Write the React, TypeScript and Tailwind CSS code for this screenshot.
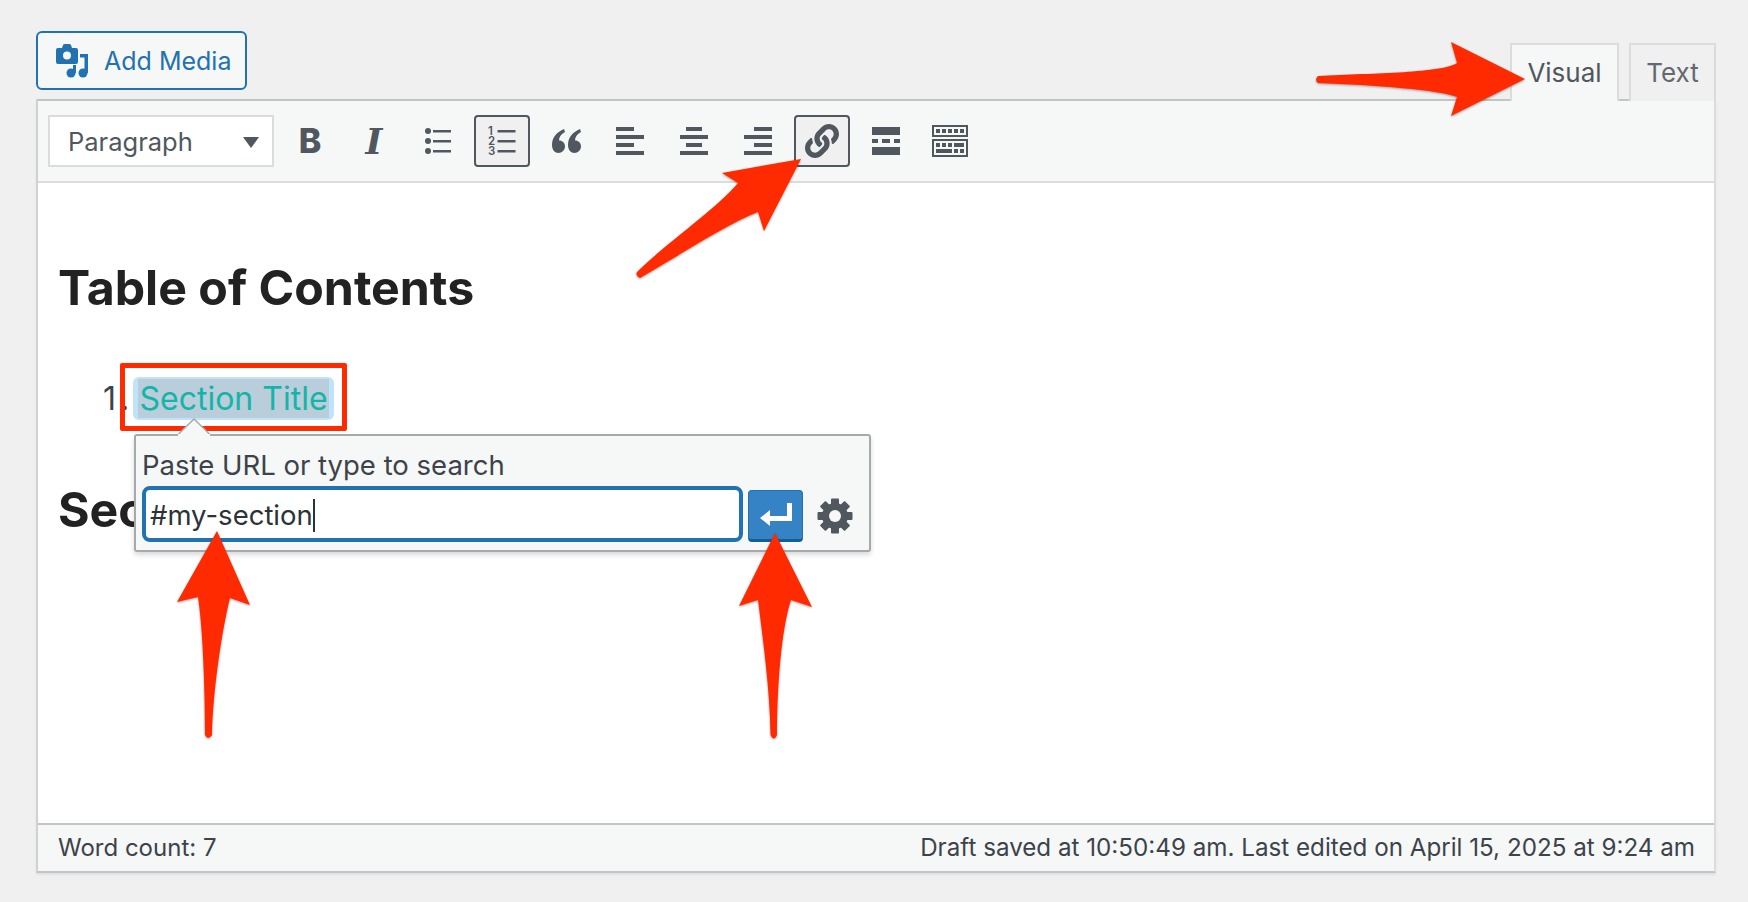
import type { ReactNode } from "react"
import { FaLink } from "react-icons/fa"

function ToolButton({ active, children }: { active?: boolean; children: ReactNode }) {
  return (
    <div
      className={`w-[56px] h-[52px] flex items-center justify-center rounded-[4px] border-2 ${
        active ? "border-[#50575e] bg-[#f0f0f1]" : "border-transparent"
      }`}
    >
      {children}
    </div>
  )
}

function Bars({ rows }: { rows: number[][] }) {
  return (
    <svg width="28" height="28" viewBox="0 0 28 28" className="fill-[#50575e]">
      {rows.map((r, i) => (
        <rect key={i} x={r[0]} y={i * 8} width={r[1]} height="4" />
      ))}
    </svg>
  )
}

function CameraMusic() {
  return (
    <svg width="34" height="36" viewBox="0 0 34 36" className="fill-[#2271b1]">
      <path d="M3 5h4l1-3q.5-1 2-1h4q1.500 0 2 1l1 3h4q2 0 2 2v12q0 2-2 2H3q-2 0-2-2V7q0-2 2-2z" />
      <circle cx="12" cy="12.500" r="4" fill="#f6f7f7" />
      <circle cx="16" cy="30" r="4.500" />
      <rect x="18" y="22" width="3" height="8" />
      <circle cx="28" cy="30" r="4.500" />
      <rect x="29.500" y="11" width="3.500" height="19" />
      <rect x="25" y="11" width="8" height="3.500" />
    </svg>
  )
}

function BulletList() {
  return (
    <svg width="26" height="26" viewBox="0 0 26 26" className="fill-[#50575e]">
      <circle cx="3" cy="3" r="3" />
      <circle cx="3" cy="13" r="3" />
      <circle cx="3" cy="23" r="3" />
      <rect x="8" y="2" width="18" height="2.500" />
      <rect x="8" y="12" width="18" height="2.500" />
      <rect x="8" y="22" width="18" height="2.500" />
    </svg>
  )
}

function NumberList() {
  return (
    <svg width="28" height="34" viewBox="0 0 28 34" className="fill-[#50575e]">
      {["1", "2", "3"].map((n, i) => (
        <g key={n}>
          <text x="0" y={11 + i * 10} fontSize="11.500" fontWeight="600" fontFamily="Inter, sans-serif">
            {n}
          </text>
          <rect x="9.500" y={6 + i * 10} width="18" height="2.500" />
        </g>
      ))}
    </svg>
  )
}

function Quote() {
  return (
    <svg width="29" height="24" viewBox="0 0 29 24" className="fill-[#50575e]">
      <path d="M12 0C5 3 0 8 0 16c0 5 3 8 6.500 8S13 21 13 17.500 10.500 11.500 7 11.500C7 8 9 5 13 3z" />
      <path d="M28 0C21 3 16 8 16 16c0 5 3 8 6.500 8S29 21 29 17.500s-2.500-6-6-6C23 8 25 5 29 3z" />
    </svg>
  )
}

function MoreTag() {
  return (
    <svg width="28" height="28" viewBox="0 0 28 28" className="fill-[#50575e]">
      <rect x="0" y="0" width="28" height="8" />
      <rect x="0" y="12" width="6" height="4" />
      <rect x="10" y="12" width="8" height="4" />
      <rect x="22" y="12" width="6" height="4" />
      <rect x="0" y="20" width="28" height="8" />
    </svg>
  )
}

function KitchenSink() {
  const top = [4, 10, 16, 22, 28]
  return (
    <svg width="36" height="32" viewBox="0 0 36 32" className="fill-[#50575e]">
      <path fillRule="evenodd" d="M0 0h36v12H0zM2 2v8h32V2z" />
      <path fillRule="evenodd" d="M0 14h36v18H0zM2 16v14h32V16z" />
      {top.map((x) => (
        <rect key={x} x={x} y="4" width="4" height="4" />
      ))}
      <rect x="4" y="18" width="4" height="4" />
      <rect x="10" y="18" width="4" height="4" />
      <rect x="16" y="18" width="4" height="4" />
      <rect x="22" y="18" width="10" height="4" />
      <rect x="4" y="24" width="16" height="4" />
      <rect x="22" y="24" width="4" height="4" />
      <rect x="28" y="24" width="4" height="4" />
    </svg>
  )
}

function Gear() {
  return (
    <svg width="36" height="36" viewBox="0 0 36 36" className="fill-[#50575e]">
      {[0, 45, 90, 135].map((a) => (
        <rect key={a} x="14" y="0.500" width="8" height="35" rx="1" transform={`rotate(${a} 18 18)`} />
      ))}
      <circle cx="18" cy="18" r="13" />
      <circle cx="18" cy="18" r="6" fill="#f6f7f7" />
    </svg>
  )
}

function Arrows() {
  return (
    <svg
      width="1748"
      height="902"
      viewBox="0 0 1748 902"
      className="absolute left-0 top-0 z-20 pointer-events-none fill-[#ff2a00] drop-shadow-[0_1px_1px_rgba(0,0,0,0.35)]"
    >
      <path d="M1318 76C1375 73 1442 73 1457 63L1451 42L1525 79L1451 116L1457 97C1440 90 1375 85 1318 83Q1314 80 1318 76Z" />
      <path d="M801 159L722 173L738 183C715 210 670 240 638 271Q634 275 640 278C680 255 725 225 758 212L764 231Z" />
      <path d="M217 531L177 602L198 597C203 630 205 690 205 735Q208 741 212 735C213 690 222 630 230 598L250 605Z" />
      <path d="M775 533L739 606L758 600C763 640 770 690 770.500 735Q774 742 777 735C777 690 781 630 791 600L812 607Z" />
    </svg>
  )
}

export default function App() {
  return (
    <div className="relative w-[1748px] h-[902px] overflow-hidden bg-[#f0f0f1] pt-[31px] pl-[36px] pr-[32px] font-['Inter',sans-serif] text-[#3c434a]">
      <div className="flex justify-between h-[68px]">
        <div className="w-[211px] h-[59px] flex items-center pl-[17px] gap-[15px] rounded-[6px] border-2 border-[#2271b1] bg-[#f6f7f7] text-[#2271b1] text-[25px]">
          <CameraMusic />
          <span className="pt-[2px]">Add Media</span>
        </div>
        <div className="flex items-end gap-[10px] self-end relative z-10 -mb-[2px]">
          <div className="w-[109px] h-[58px] flex items-center justify-center pb-[2px] border-2 border-b-0 border-[#dcdcde] bg-[#f6f7f7] text-[26px] text-[#50575e]">
            Visual
          </div>
          <div className="w-[87px] h-[58px] flex items-center justify-center pb-[2px] border-2 border-b-0 border-[#dcdcde] bg-[#f0f0f1] text-[26px] text-[#646970]">
            Text
          </div>
        </div>
      </div>
      <div className="border-x-2 border-y-2 border-t-[#c3c4c7] border-b-[#c3c4c7] border-l-[#d0d1d4] border-r-[#dcdcde] shadow-[0_2px_2px_rgba(0,0,0,0.06)]">
        <div className="h-[82px] flex items-center pl-[10px] gap-[8px] bg-[#f6f7f7] border-b-2 border-[#dcdcde]">
          <div className="w-[226px] h-[52px] flex items-center justify-between pl-[18px] pr-[13px] pt-[2px] bg-white border-2 border-[#dcdcde] text-[25.500px] text-[#50575e]">
            <span>Paragraph</span>
            <svg width="16" height="11" viewBox="0 0 16 11" className="fill-[#50575e]">
              <polygon points="0,0 16,0 8,11" />
            </svg>
          </div>
          <ToolButton>
            <span className="font-extrabold text-[34px] leading-none text-[#50575e]">B</span>
          </ToolButton>
          <ToolButton>
            <span className="font-['DejaVu_Serif',serif] font-bold italic text-[36px] leading-none text-[#50575e]">I</span>
          </ToolButton>
          <ToolButton>
            <BulletList />
          </ToolButton>
          <ToolButton active>
            <NumberList />
          </ToolButton>
          <ToolButton>
            <Quote />
          </ToolButton>
          <ToolButton>
            <Bars rows={[[0, 18], [0, 28], [0, 18], [0, 28]]} />
          </ToolButton>
          <ToolButton>
            <Bars rows={[[6, 16], [0, 28], [6, 16], [0, 28]]} />
          </ToolButton>
          <ToolButton>
            <Bars rows={[[10, 18], [0, 28], [10, 18], [0, 28]]} />
          </ToolButton>
          <ToolButton active>
            <FaLink size={34} color="#50575e" />
          </ToolButton>
          <ToolButton>
            <MoreTag />
          </ToolButton>
          <ToolButton>
            <KitchenSink />
          </ToolButton>
        </div>

        <div className="relative h-[640px] bg-white pl-[20px] pt-[75px]">
          <h2 className="text-[48.250px] leading-[60px] font-bold text-[#222222]">Table of Contents</h2>
          <div className="flex items-center h-[68px] mt-[45px] pl-[45px] text-[32px]">
            <span className="w-[17px] pt-[4px] tracking-[4px]">1.</span>
            <div className="relative flex items-center justify-center w-[227px] h-[68px] pt-[3px] border-[5px] border-[#ff2a00] rounded-[2px]">
              <div className="w-[201px] h-[43px] flex items-center justify-center rounded-[6px] bg-[#bfe3fb]">
                <span className="h-[39px] leading-[39px] px-[1px] bg-[#b9cdda] text-[#14b5a8]">Section Title</span>
              </div>
            </div>
          </div>
          <h2 className="text-[48.250px] leading-[60px] font-bold text-[#222222] mt-[49px]">Sec</h2>

          <div className="absolute left-[96px] top-[251px] w-[737px] h-[118px] pt-[13px] pl-[6px] rounded-[3px] border-2 border-[#a7aaad] bg-[#f6f7f7] shadow-[0_3px_5px_rgba(0,0,0,0.15)]">
            <svg width="34" height="18" viewBox="0 0 34 18" className="absolute left-[41px] -top-[18px]">
              <polygon points="0,17.500 17,1 34,17.500" fill="#f6f7f7" stroke="#a7aaad" strokeWidth="1.500" />
              <rect x="1" y="16" width="32" height="3" fill="#f6f7f7" />
            </svg>
            <div className="text-[27.500px] leading-[32px] text-[#3c434a]">Paste URL or type to search</div>
            <div className="flex items-end gap-[5px] mt-[5px]">
              <div className="w-[601px] h-[56px] flex items-center pl-[4px] rounded-[8px] border-[4px] border-[#2271b1] bg-white text-[27.500px] text-[#2c3338]">
                <span className="pt-[3px]">#my-section</span>
                <span className="w-[2px] h-[33px] mt-[3px] bg-[#2c3338]" />
              </div>
              <div className="w-[55px] h-[52px] flex items-center justify-center rounded-[4px] bg-[#3582c4] border border-[#2271b1] border-b-[3px] border-b-[#135e96]">
                <svg width="32" height="24" viewBox="0 0 32 24" className="fill-white">
                  <polygon points="0,15 10,7 10,13 27,13 27,0 32,0 32,18 10,18 10,23" />
                </svg>
              </div>
              <div className="ml-[9px] mb-[8px]">
                <Gear />
              </div>
            </div>
          </div>
        </div>

        <div className="h-[48px] flex items-center justify-between pl-[20px] pr-[19px] bg-[#f6f7f7] border-t-2 border-[#c3c4c7] text-[24px] text-[#3c434a]">
          <span>Word count: 7</span>
          <span className="text-[24.200px]">Draft saved at 10:50:49 am. Last edited on April 15, 2025 at 9:24 am</span>
        </div>
      </div>
      <Arrows />
    </div>
  )
}
